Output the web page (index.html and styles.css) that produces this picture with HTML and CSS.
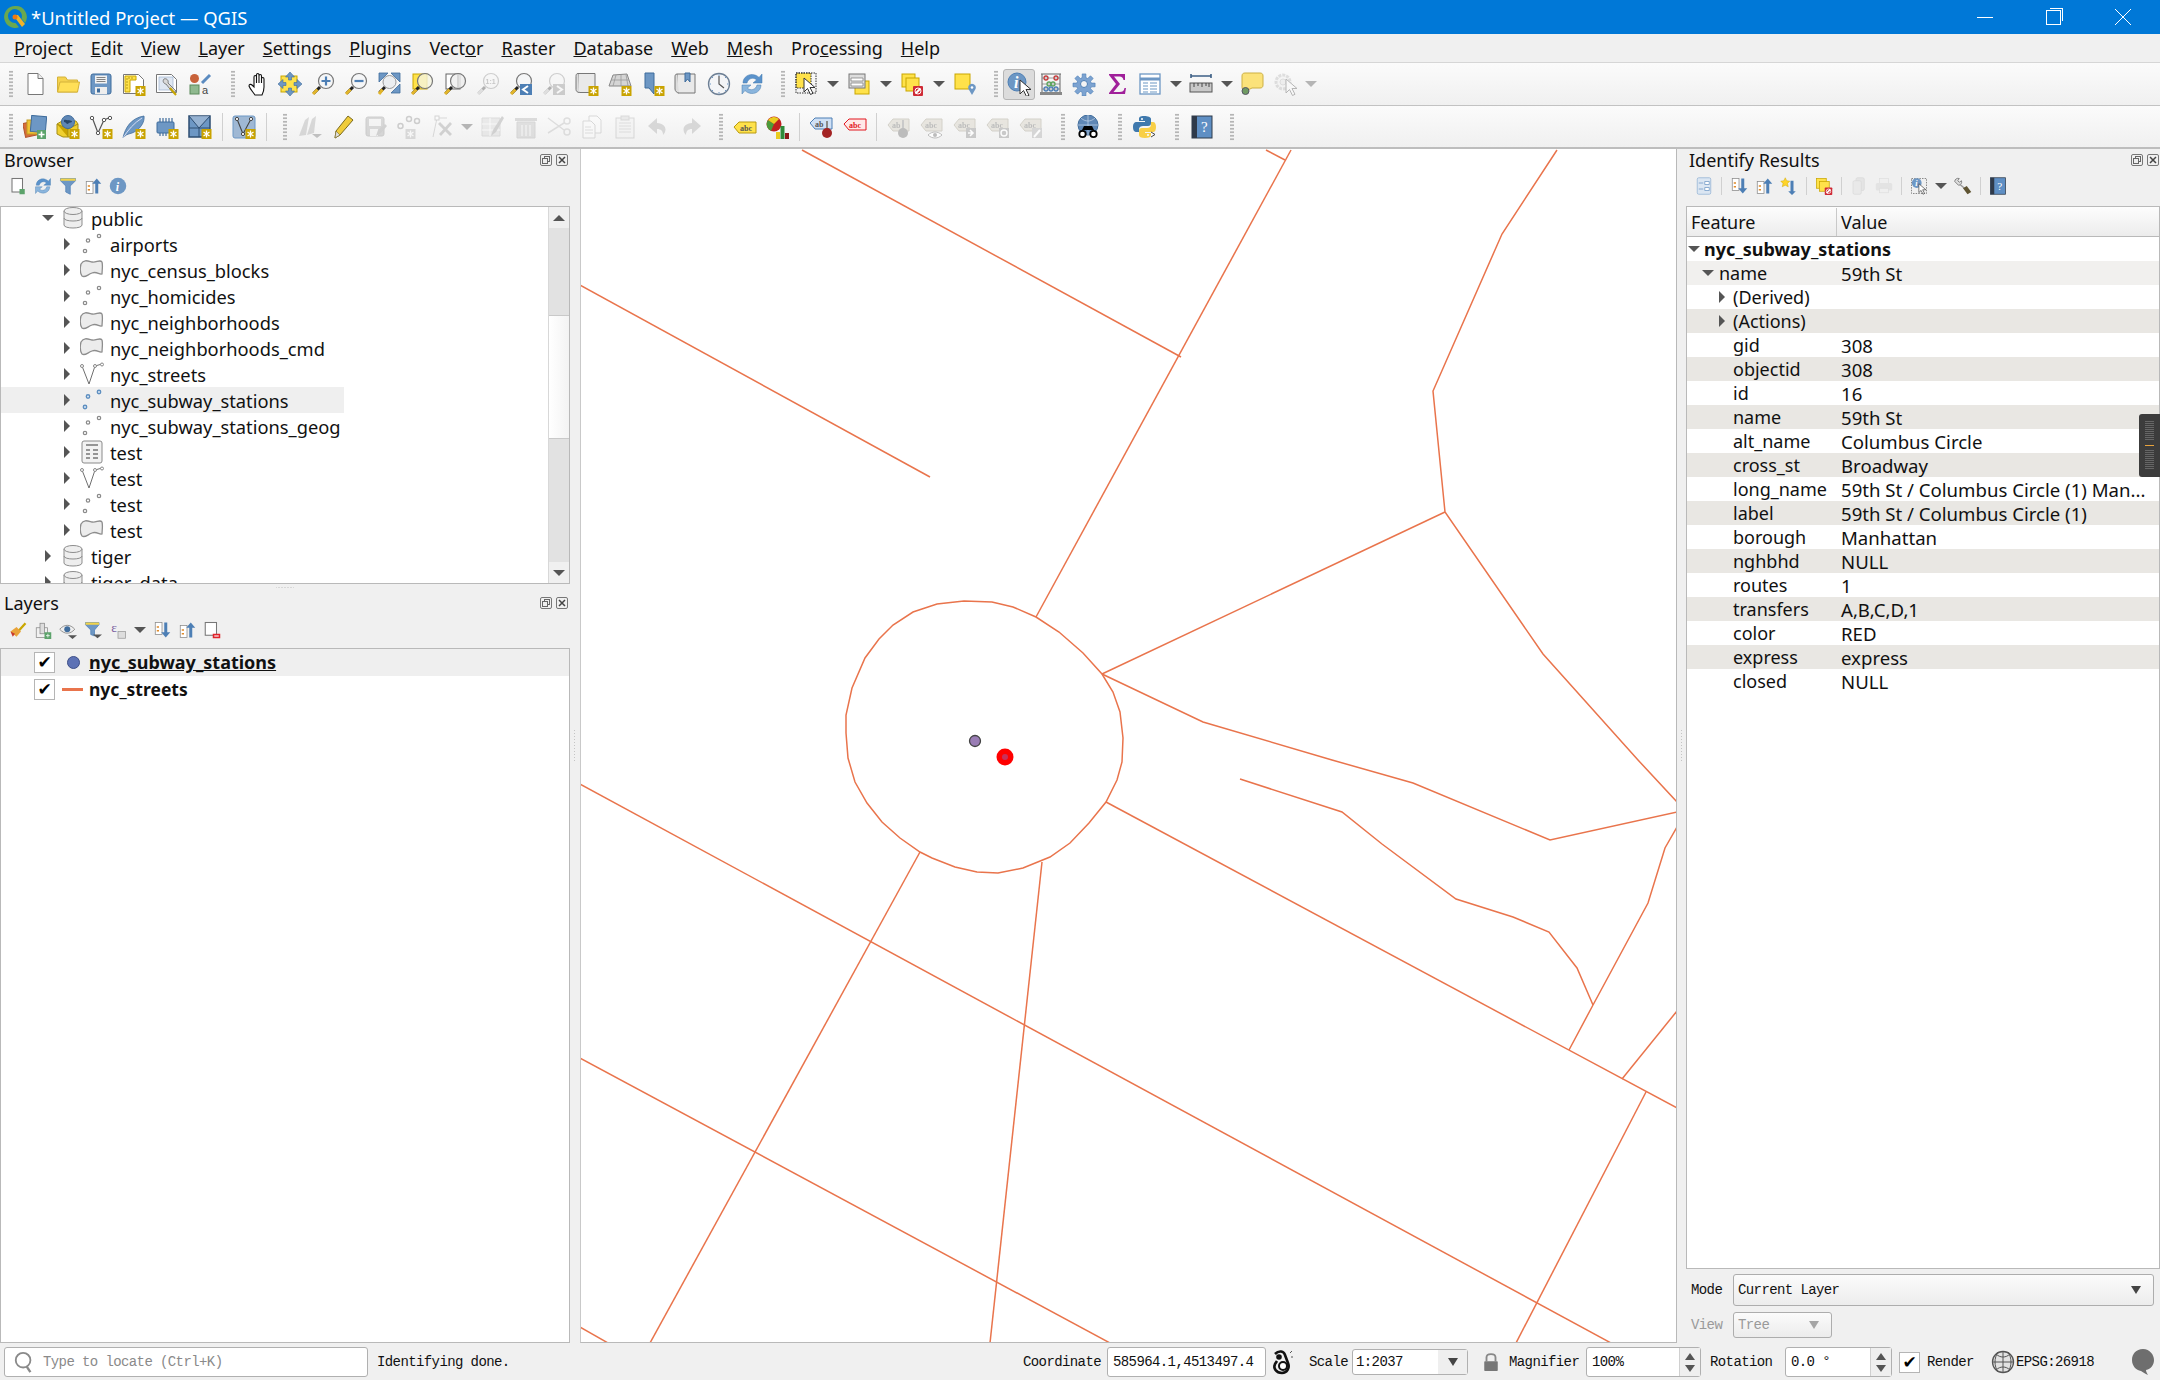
FILE: index.html
```html
<!DOCTYPE html>
<html lang="en">
<head>
<meta charset="utf-8">
<title>*Untitled Project — QGIS</title>
<link rel="stylesheet" href="styles.css">
</head>
<body>
<svg class="sprite" xmlns="http://www.w3.org/2000/svg">
<defs>
<g id="bdg"><rect x="13.5" y="14" width="10" height="10" fill="#c9a300"/><path d="M18.5 15.5v7M15.5 17l6 4M21.5 17l-6 4" stroke="#fff" stroke-width="1.3"/></g>
<g id="lens"><path d="M9 15l-6.500 6.500" stroke="#222" stroke-width="3"/><path d="M6.500 17.500l-4.500 4.500" stroke="#e2b52a" stroke-width="3"/><circle cx="15" cy="9" r="7.500" fill="#f5f6f7" stroke="#777" stroke-width="1.200"/></g>
<g id="ptr"><path d="M8 7v14l3.500-3.500 3 6 2.500-1.200-3-5.800h5z" fill="#fff" stroke="#333" stroke-width="1"/></g>
<g id="tag"><path d="M1 10l5-6h16v12H6z" fill="#e3e0d8" stroke="#c8c5bb"/></g>
<g id="helpb"><rect x="2" y="1" width="20" height="22" fill="#5f8fc4" stroke="#2f3a4a"/><rect x="2" y="1" width="5" height="22" fill="#2f3a4a"/></g>
</defs>
<symbol id="new" viewBox="0 0 24 24"><path d="M5 1.500h10l5 5v16H5z" fill="#fff" stroke="#777"/><path d="M15 1.500v5h5" fill="#eee" stroke="#777"/></symbol>
<symbol id="open" viewBox="0 0 24 24"><path d="M1.500 20V5h8l2 3h10v12z" fill="#f5d24e" stroke="#d4b23a"/><path d="M1.500 20L4 10h19.500l-2 10z" fill="#ffdf57" stroke="#d4b23a"/></symbol>
<symbol id="save" viewBox="0 0 24 24"><rect x="2" y="2" width="20" height="20" rx="2" fill="#6d97c4" stroke="#3f6c9c"/><rect x="6" y="3.500" width="12" height="8" fill="#f2f2f2"/><path d="M7.500 5.500h9M7.500 7.500h9M7.500 9.500h9" stroke="#666" stroke-width=".8"/><rect x="6" y="15" width="12" height="7" fill="#eee"/><rect x="8" y="16.500" width="3" height="4" fill="#3f6c9c"/></symbol>
<symbol id="nlay" viewBox="0 0 24 24"><path d="M1.500 2.500h15l5 5v14h-20z" fill="#fff" stroke="#777"/><path d="M3 4h11v4H8v12H3z" fill="#ffe24a" stroke="#c9a600"/><path d="M4 7h2M4 10h2M4 13h2M4 16h2M7 5v2M10 5v2" stroke="#a58a10" stroke-width=".8"/><use href="#bdg"/></symbol>
<symbol id="lays" viewBox="0 0 24 24"><path d="M1.500 2.500h15l5 5v13h-20z" fill="#fff" stroke="#777"/><rect x="4" y="5" width="14" height="13" fill="#dfe7f2" stroke="#9db3cf" stroke-width=".7"/><path d="M9 7c-2 2 0 5 2 5l7 9 3-2-8-8c1-3-2-5-4-4z" fill="#d9d9d9" stroke="#666" stroke-width=".8"/><path d="M15 16l6 7" stroke="#c9a600" stroke-width="2"/></symbol>
<symbol id="hand" viewBox="0 0 24 24"><path d="M10 23c-2-3-5-6-6-9 0-2 2-2 3-1l2 2V5c0-2 2.500-2 2.500 0v6V3c0-2 2.500-2 2.500 0v8V4c0-2 2.500-2 2.500 0v7V7c0-2 2.500-2 2.500 0v8c0 3-1 6-2 8z" fill="#fff" stroke="#111" stroke-width="1.100"/></symbol>
<symbol id="pan" viewBox="0 0 24 24"><rect x="3" y="4" width="16" height="16" fill="#ffe24a" stroke="#c9a600"/><path d="M12 0l4.500 5h-3v3h-3V5h-3zM12 24l4.500-5h-3v-3h-3v3h-3zM0 12l5-4.500v3h3v3H5v3zM24 12l-5-4.500v3h-3v3h3v3z" fill="#6d97c4" stroke="#3f6c9c" stroke-width=".6"/></symbol>
<symbol id="zin" viewBox="0 0 24 24"><use href="#lens"/><path d="M15 4.500v9M10.500 9h9" stroke="#4d7fb5" stroke-width="2.200"/></symbol>
<symbol id="zout" viewBox="0 0 24 24"><use href="#lens"/><path d="M10.500 9h9" stroke="#4d7fb5" stroke-width="2.200"/></symbol>
<symbol id="zfull" viewBox="0 0 24 24"><path d="M2 1h9L2 10zM23 1v9l-9-9zM23 21h-9l9-9z" fill="#6d97c4" stroke="#3f6c9c" stroke-width=".8"/><path d="M8 15l-5.500 5.500" stroke="#222" stroke-width="3"/><path d="M5.500 17.500l-3.500 4.500" stroke="#e2b52a" stroke-width="3"/><circle cx="12.500" cy="10" r="6.500" fill="#eceef0" stroke="#999"/></symbol>
<symbol id="zsel" viewBox="0 0 24 24"><rect x="3" y="2" width="14" height="15" fill="#ffe24a" stroke="#c9a600"/><path d="M9 15l-6.500 6.500" stroke="#222" stroke-width="3"/><path d="M6.500 17.500l-4.500 4.500" stroke="#e2b52a" stroke-width="3"/><circle cx="15" cy="9" r="7.500" fill="#f5f5e0" fill-opacity=".8" stroke="#777" stroke-width="1.200"/></symbol>
<symbol id="zlay" viewBox="0 0 24 24"><rect x="3" y="2" width="14" height="15" fill="#fff" stroke="#666"/><path d="M9 15l-6.500 6.500" stroke="#222" stroke-width="3"/><path d="M6.500 17.500l-4.500 4.500" stroke="#e2b52a" stroke-width="3"/><circle cx="15" cy="9" r="7.500" fill="#eee" fill-opacity=".8" stroke="#777" stroke-width="1.200"/><path d="M15 2v14" stroke="#bbb"/></symbol>
<symbol id="zlast" viewBox="0 0 24 24"><use href="#lens"/><rect x="11" y="12" width="12" height="11" fill="#4d7fb5"/><path d="M19 14l-5 3.500 5 3.500" fill="none" stroke="#fff" stroke-width="2"/></symbol>
<symbol id="znext" viewBox="0 0 24 24"><use href="#lens"/><rect x="11" y="12" width="12" height="11" fill="#4d7fb5"/><path d="M15 14l5 3.500-5 3.500" fill="none" stroke="#fff" stroke-width="2"/></symbol>
<symbol id="nmap" viewBox="0 0 24 24"><path d="M3 1.500h17v19H5c-2 0-2-2-2-4z" fill="#e9e9e9" stroke="#777"/><path d="M3 1.500c-2 0-2 2-2 3v13c0 2 2 3 3 3" fill="#ddd" stroke="#777"/><use href="#bdg"/></symbol>
<symbol id="n3d" viewBox="0 0 24 24"><path d="M5 3l14-1 4 12H1z" fill="#d5d5d5" stroke="#888"/><path d="M8 3L5 14M13 2.500V14M18 2.500L20 14M3 8h18" stroke="#999" stroke-width=".8"/><use href="#bdg"/></symbol>
<symbol id="nbm" viewBox="0 0 24 24"><path d="M4 1h9v21L8 16H4z" fill="#6d97c4" stroke="#3f6c9c"/><use href="#bdg"/></symbol>
<symbol id="sbm" viewBox="0 0 24 24"><path d="M3 2h18v19H5c-2 0-2-2-2-3z" fill="#e9e9e9" stroke="#777"/><path d="M3 2C1 2 1 4 1 5v12c0 2 2 4 4 4" fill="#ddd" stroke="#777"/><path d="M11 1h5v9l-2.500-3L11 10z" fill="#6d97c4" stroke="#3f6c9c"/></symbol>
<symbol id="clock" viewBox="0 0 24 24"><circle cx="12" cy="12" r="10.500" fill="#f4f5f7" stroke="#6d7f94" stroke-width="1.300"/><path d="M12 4v8l5 4" fill="none" stroke="#555" stroke-width="1.200"/><path d="M12 2.500v1.500M12 20v1.500M2.500 12H4M20 12h1.500M5 5l1 1M18 18l1 1M19 5l-1 1M5 19l1-1" stroke="#6d97c4"/></symbol>
<symbol id="refresh" viewBox="0 0 24 24"><path d="M3 11C3 5 9 1 15 3c2 .7 3 1.500 4 2.500L22 2v9h-9l3.500-3C14 5 8 6 7 11z" fill="#5b93cc" stroke="#4378ac" stroke-width=".5"/><path d="M21 13c0 6-6 10-12 8-2-.7-3-1.500-4-2.500L2 22v-9h9l-3.500 3c2.500 3 8.500 2 9.500-3z" fill="#8ab5dd" stroke="#4378ac" stroke-width=".5"/></symbol>
<symbol id="sel" viewBox="0 0 24 24"><rect x="2" y="1" width="15" height="15" fill="#ffe24a" stroke="#333" stroke-dasharray="1.500 1"/><rect x="2" y="1" width="20" height="20" fill="none" stroke="#333" stroke-dasharray="1.500 1"/><use href="#ptr" transform="translate(2 -1)"/></symbol>
<symbol id="selattr" viewBox="0 0 24 24"><rect x="8" y="9" width="14" height="13" fill="#ffe24a" stroke="#c9a600"/><rect x="2" y="2" width="16" height="14" fill="#ddd" stroke="#777"/><path d="M4 6h12v3H4zM4 11h12v3H4z" fill="#fff" stroke="#777" stroke-width=".7"/></symbol>
<symbol id="desel" viewBox="0 0 24 24"><rect x="2" y="2" width="13" height="13" fill="#ffe24a" stroke="#c9a600"/><rect x="6" y="6" width="13" height="13" fill="#ffe24a" stroke="#c9a600"/><rect x="13" y="14" width="10" height="10" rx="1" fill="#cf2a35"/><path d="M15.500 21.500l5-5" stroke="#fff" stroke-width="2"/><circle cx="18" cy="19" r="3" fill="none" stroke="#fff"/></symbol>
<symbol id="selpin" viewBox="0 0 24 24"><rect x="2" y="2" width="15" height="15" fill="#ffe24a" stroke="#c9a600"/><path d="M19 23l-3.500-6a3.800 3.800 0 1 1 7 0z" fill="#6d97c4"/><circle cx="19" cy="15.500" r="1.300" fill="#fff"/></symbol>
<symbol id="abacus" viewBox="0 0 24 24"><path d="M2 2h20M3 2v19M21 2v19" stroke="#666" fill="none"/><rect x="1" y="20" width="22" height="3" fill="#888"/><path d="M3 6h18M3 12h18M3 17h18" stroke="#777" stroke-width=".7"/><g fill="none" stroke-width="1.300"><circle cx="7" cy="6" r="2" stroke="#c43c3c"/><circle cx="17" cy="6" r="2" stroke="#c43c3c"/><circle cx="10" cy="12" r="2" stroke="#5ca35c"/><circle cx="14" cy="12" r="2" stroke="#5ca35c"/><circle cx="7" cy="17" r="2" stroke="#4d7fb5"/><circle cx="12" cy="17" r="2" stroke="#4d7fb5"/><circle cx="17" cy="17" r="2" stroke="#4d7fb5"/></g></symbol>
<symbol id="gear" viewBox="0 0 24 24"><path d="M10 1h4v4l2 1 3-3 3 3-3 3 1 2h4v4h-4l-1 2 3 3-3 3-3-3-2 1v4h-4v-4l-2-1-3 3-3-3 3-3-1-2H0v-4h4l1-2-3-3 3-3 3 3 2-1z" transform="translate(1 1) scale(.92)" fill="#7ca3d1" stroke="#4d7fb5" stroke-width=".7"/><circle cx="12" cy="12" r="3.500" fill="#f4f4f4" stroke="#4d7fb5"/></symbol>
<symbol id="sigma" viewBox="0 0 24 24"><path d="M4 2h16v6h-1.500c-.5-2-1.500-3.500-4-3.500H9l6 7.500-6.500 8h6c3 0 4.500-1 5-4H21l-1 6H4v-1l7-9-7-9z" fill="#a0209a"/></symbol>
<symbol id="table" viewBox="0 0 24 24"><rect x="2" y="2" width="20" height="20" fill="#fff" stroke="#6d97c4" stroke-width="1.300"/><path d="M2 7h20" stroke="#6d97c4" stroke-width="3"/><path d="M5 11h5M12 11h7M5 14h5M12 14h7M5 17h5M12 17h7M5 20h5M12 20h7" stroke="#6d97c4" stroke-width="1.200"/></symbol>
<symbol id="ruler" viewBox="0 0 24 24"><path d="M2 4h20M2 2v4M22 2v4" stroke="#3d5f85" stroke-width="1.600"/><rect x="1" y="11" width="22" height="9" fill="#c9c9c9" stroke="#555"/><path d="M5 11v4M9 11v3M13 11v4M17 11v3M20 11v4" stroke="#444"/></symbol>
<symbol id="tip" viewBox="0 0 24 24"><path d="M5 1h15c2 0 3 1 3 3v9c0 2-1 3-3 3h-8l-4 2H5c-2 0-3-1-3-3V4c0-2 1-3 3-3z" fill="#fbe27a" stroke="#cdb043"/><circle cx="5.500" cy="19" r="3.500" fill="#6f9a62" stroke="#556"/></symbol>
<symbol id="gearoff" viewBox="0 0 24 24"><circle cx="10" cy="10" r="7" fill="#eee" stroke="#aaa" stroke-width="3" stroke-dasharray="3 1"/><circle cx="10" cy="10" r="3" fill="#ddd" stroke="#aaa"/><use href="#ptr" transform="translate(5 0)"/></symbol>
<symbol id="dsm" viewBox="0 0 24 24"><rect x="1" y="7" width="14" height="14" transform="rotate(-12 8 14)" fill="#d66c3b" stroke="#b2552c"/><rect x="4" y="5" width="13" height="14" fill="#f0c234" stroke="#c29c20"/><rect x="8" y="1" width="15" height="16" transform="rotate(5 15 9)" fill="#6d97c4" stroke="#3f6c9c"/><rect x="14" y="15" width="9" height="9" fill="#5ca36b"/><path d="M18.500 16.500v6M15.500 19.500h6" stroke="#fff" stroke-width="1.600"/></symbol>
<symbol id="gpkg" viewBox="0 0 24 24"><path d="M1 9l5-3h14l2 3v10l-7 3H7l-6-3z" fill="#f0d030" stroke="#a58d14"/><path d="M1 9l11 5v8M12 14l10-5" fill="#c9a300" stroke="#a58d14"/><circle cx="12" cy="7" r="6.500" fill="#5f87b5" stroke="#3f6c9c"/><path d="M8 5c2-1 3 1 5 0 1 1 3 0 3 2-2 1-3 0-4 2-2 0-2-2-4-2z" fill="#28466a"/><use href="#bdg"/></symbol>
<symbol id="nshp" viewBox="0 0 24 24"><path d="M3 2l6 16 6-13 7-3" fill="none" stroke="#555" stroke-width="1.200"/><g fill="#fff" stroke="#555"><circle cx="3" cy="3" r="1.700"/><circle cx="9" cy="18" r="1.700"/><circle cx="15" cy="5" r="1.700"/><circle cx="21" cy="3" r="1.700"/></g><use href="#bdg"/></symbol>
<symbol id="feather" viewBox="0 0 24 24"><path d="M1 23C3 13 9 3 22 1c1 6-4 14-12 17-3 1-5 1-7 3z" fill="#6d97c4" stroke="#3f6c9c" stroke-width=".8"/><path d="M1 23C6 15 12 8 20 3" stroke="#eef" fill="none" stroke-width=".8"/><use href="#bdg"/></symbol>
<symbol id="chip" viewBox="0 0 24 24"><rect x="2" y="7" width="17" height="11" rx="1" fill="#6d97c4" stroke="#3f6c9c"/><path d="M5 3v4M8 3v4M11 3v4M14 3v4M17 3v4M5 18v3M8 18v3M11 18v3" stroke="#3f6c9c" stroke-width="1.200"/><use href="#bdg"/></symbol>
<symbol id="mesh" viewBox="0 0 24 24"><rect x="1" y="1" width="21" height="21" fill="#6d97c4" stroke="#2e4e72" stroke-width="1.500"/><path d="M1 1h21L11 13z" fill="#a6bdd8" fill-opacity=".7"/><path d="M1 13h21M11 13v9M1 1l10 12M22 1L11 13" stroke="#2e4e72" fill="none"/><use href="#bdg"/></symbol>
<symbol id="vlayer" viewBox="0 0 24 24"><rect x="1" y="1" width="22" height="22" rx="2" fill="#9fb8d4" stroke="#6d97c4"/><path d="M5 4l6 15 8-15" fill="none" stroke="#444" stroke-width="1.100"/><g fill="#fff" stroke="#444"><circle cx="5" cy="4" r="1.600"/><circle cx="11" cy="19" r="1.600"/><circle cx="19" cy="4" r="1.600"/></g><use href="#bdg"/></symbol>
<symbol id="penoff" viewBox="0 0 24 24"><path d="M1 21L7 5l4-3-3 18zM9 20l5-16 4-3-2 17z" fill="#999"/><path d="M14 19h10l-5 4z" fill="#555"/></symbol>
<symbol id="pencil" viewBox="0 0 24 24"><path d="M4 23l1-7L17 1l5 4L9 20z" fill="#f0cc3a" stroke="#7a6a20"/><path d="M4 23l1-7 4 4z" fill="#ddd" stroke="#7a6a20" stroke-width=".6"/></symbol>
<symbol id="save2" viewBox="0 0 24 24"><rect x="2" y="2" width="18" height="19" rx="2" fill="#999" stroke="#777"/><rect x="5" y="4" width="12" height="7" fill="#eee"/><rect x="6" y="14" width="8" height="7" fill="#eee"/><path d="M12 21l2-6 7-6 2 2-6 7z" fill="#888"/></symbol>
<symbol id="dots" viewBox="0 0 24 24"><g fill="none" stroke="#777" stroke-width="1.500"><circle cx="3.500" cy="11" r="2.500"/><circle cx="12" cy="4" r="2.500"/><circle cx="20" cy="6" r="2.500"/></g><use href="#bdg" transform="translate(-5 0)"/></symbol>
<symbol id="tools" viewBox="0 0 24 24"><path d="M3 22L7 3M7 3h10" stroke="#999" fill="none"/><rect x="5" y="1" width="4" height="4" fill="#fff" stroke="#888"/><path d="M8 9l12 12 2-2L10 7zM20 7L9 19l2 2L22 9z" fill="#888"/></symbol>
<symbol id="tblpen" viewBox="0 0 24 24"><path d="M1 3h18v18H1z" fill="#cfcfc0" stroke="#a5a5a0"/><path d="M1 9h18M1 15h18M9 3v18" stroke="#fff"/><path d="M10 21l2-6 9-14 2 2-8 14z" fill="#888"/></symbol>
<symbol id="trash" viewBox="0 0 24 24"><rect x="1" y="3" width="22" height="3" fill="#b19b95"/><path d="M3 7h18v16H3z" fill="#c0aea8" stroke="#a58f88"/><path d="M8 10v11M12 10v11M16 10v11" stroke="#fff"/></symbol>
<symbol id="scissors" viewBox="0 0 24 24"><path d="M1 3l16 12M1 18L17 8" stroke="#aaa" stroke-width="1.500"/><circle cx="20" cy="6" r="3" fill="none" stroke="#aaa" stroke-width="1.500"/><circle cx="20" cy="17" r="3" fill="none" stroke="#aaa" stroke-width="1.500"/></symbol>
<symbol id="copy" viewBox="0 0 24 24"><path d="M9 1h8l4 4v13H9z" fill="#fff" stroke="#999"/><path d="M3 6h8l4 4v13H3z" fill="#fff" stroke="#999"/><path d="M5 12h6M5 15h8M5 18h8" stroke="#aaa"/></symbol>
<symbol id="paste" viewBox="0 0 24 24"><rect x="3" y="3" width="18" height="20" fill="#eee" stroke="#999"/><rect x="8" y="1" width="8" height="4" fill="#ccc" stroke="#999"/><path d="M6 8h12M6 11h12M6 14h12M6 17h12" stroke="#aaa"/></symbol>
<symbol id="undo" viewBox="0 0 24 24"><path d="M11 3L2 11l9 8v-5c4 0 6 2 6 6 4-4 4-11-6-12z" fill="#999"/></symbol>
<symbol id="redo" viewBox="0 0 24 24"><path d="M13 3l9 8-9 8v-5c-4 0-6 2-6 6-4-4-4-11 6-12z" fill="#999"/></symbol>
<symbol id="pie" viewBox="0 0 24 24"><circle cx="8" cy="9" r="7.500" fill="#c01f1f"/><path d="M8 9L2 5a7.500 7.500 0 0 0 3 11z" fill="#4c9a3a"/><path d="M8 9L2 5a7.500 7.500 0 0 1 11-1z" fill="#e9cc20"/><rect x="10" y="17" width="4" height="7" fill="#e9cc20"/><rect x="14.500" y="11" width="4" height="13" fill="#2e8b3a"/><rect x="19" y="18" width="4" height="6" fill="#8a1a1a"/></symbol>
<symbol id="globe" viewBox="0 0 24 24"><circle cx="12" cy="10" r="10" fill="#5f87b5" stroke="#3f6c9c"/><path d="M2 10h20M12 0v20M5 3c4 4 10 4 14 0M5 17c4-4 10-4 14 0" stroke="#c5d6e8" fill="none" stroke-width=".7"/><path d="M6 15l2-4h8l2 4z" fill="#000"/><circle cx="6.500" cy="19" r="3.200" fill="#fff" stroke="#000" stroke-width="1.800"/><circle cx="17.500" cy="19" r="3.200" fill="#fff" stroke="#000" stroke-width="1.800"/></symbol>
<symbol id="py" viewBox="0 0 24 24"><path d="M11 1c-4 0-5 1-5 3v2h6v1H4C1 7 0 9 0 12s1 5 4 5h2v-3c0-2 2-3 4-3h5c2 0 3-1 3-3V4c0-2-3-3-7-3z" fill="#3f79ad"/><path d="M12 23c4 0 6-1 6-3v-2h-6v-1h8c2 0 3-2 3-5s-1-5-3-5h-2v3c0 2-2 3-4 3H9c-2 0-3 1-3 3v4c0 2 2 3 6 3z" fill="#f8cf47"/><circle cx="9" cy="4" r="1" fill="#fff"/><circle cx="15" cy="20" r="1" fill="#fff"/><path d="M18 17l4 2.500-4 2.500" fill="#fff" stroke="#444"/></symbol>
<symbol id="pt" viewBox="0 0 24 24"><g fill="#fff" stroke="#8a8a8a" stroke-width="1.200"><circle cx="5" cy="19" r="1.700"/><circle cx="8" cy="8.500" r="1.700"/><circle cx="19" cy="4" r="1.700"/></g></symbol>
<symbol id="ptb" viewBox="0 0 24 24"><g fill="#dce8f5" stroke="#5e8fc0" stroke-width="1.400"><circle cx="5" cy="19" r="1.700"/><circle cx="8" cy="8.500" r="1.700"/><circle cx="19" cy="4" r="1.700"/></g></symbol>
<symbol id="poly" viewBox="0 0 24 24"><path d="M1 6c3-5 7-3 11-2s8-3 10 0c1 4 0 9 0 12-3 1-5-3-10-1s-7 5-10 3C0 15 0 10 1 6z" fill="#ececec" stroke="#8d8d8d" stroke-width="1.300"/></symbol>
<symbol id="line" viewBox="0 0 24 24"><path d="M2 4l7 18 6-18 7-2" fill="none" stroke="#6f6f6f"/><g fill="#fff" stroke="#888"><circle cx="2" cy="4" r="1.500"/><circle cx="15" cy="4" r="1.500"/><circle cx="22" cy="2.500" r="1.500"/></g></symbol>
<symbol id="tbl" viewBox="0 0 24 24"><rect x="2" y="1" width="20" height="22" rx="2" fill="#f2f2f2" stroke="#8a8a8a"/><path d="M6 5h12M6 10h4M13 10h5M6 14h4M13 14h5M6 18h4M13 18h5" stroke="#777" stroke-width="1.400"/></symbol>
<symbol id="db" viewBox="0 0 24 24"><path d="M3 5v14c0 4 18 4 18 0V5z" fill="#eee" stroke="#8d8d8d"/><ellipse cx="12" cy="5" rx="9" ry="3.500" fill="#eee" stroke="#8d8d8d"/><path d="M3 12c0 4 18 4 18 0" fill="none" stroke="#8d8d8d"/></symbol>
<symbol id="addb" viewBox="0 0 24 24"><rect x="4" y="2" width="14" height="18" fill="#fff" stroke="#777" stroke-width="1.400"/><rect x="14" y="16" width="7" height="7" fill="#5ca36b"/></symbol>
<symbol id="filter" viewBox="0 0 24 24"><path d="M2 2h20v3l-7 7v11l-6-3v-8L2 5z" fill="#6d97c4" stroke="#4d7fb5"/><rect x="2" y="2" width="20" height="3" fill="#f1d34a"/></symbol>
<symbol id="coll" viewBox="0 0 24 24"><rect x="3" y="6" width="9" height="16" fill="#fff" stroke="#888"/><path d="M5 12h3M5 17h3" stroke="#e08a2a" stroke-width="2"/><path d="M15 22V9h-4l6-7 6 7h-4v13z" fill="#4d7fb5"/></symbol>
<symbol id="expd" viewBox="0 0 24 24"><rect x="3" y="2" width="9" height="16" fill="#fff" stroke="#888"/><path d="M5 8h3M5 13h3" stroke="#e08a2a" stroke-width="2"/><path d="M15 2v13h-4l6 7 6-7h-4V2z" fill="#4d7fb5"/></symbol>
<symbol id="brush" viewBox="0 0 24 24"><path d="M12 14L22 3" stroke="#c9a600" stroke-width="3"/><path d="M2 14l8-6 6 6-6 7z" fill="#e9a33a"/><path d="M2 14l6 3-3 4z" fill="#c8392e"/></symbol>
<symbol id="addg" viewBox="0 0 24 24"><rect x="3" y="9" width="15" height="13" fill="#f1f1f1" stroke="#888"/><rect x="8" y="3" width="6" height="14" fill="#ddd" stroke="#888"/><rect x="14" y="15" width="9" height="9" fill="#5ca36b"/><path d="M18.500 17v5M16 19.500h5" stroke="#fff"/></symbol>
<symbol id="eye" viewBox="0 0 24 24"><path d="M1 11c6-7 14-7 20 0-6 7-14 7-20 0z" fill="#eee" stroke="#777"/><circle cx="11" cy="11" r="4" fill="#3f6c9c"/><path d="M12 19h12l-6 5z" fill="#555"/></symbol>
<symbol id="filt2" viewBox="0 0 24 24"><path d="M2 2h18v3l-6 7v8l-5-2v-6L2 5z" fill="#6d97c4" stroke="#4d7fb5"/><rect x="2" y="2" width="18" height="3" fill="#f1d34a"/><path d="M12 18h12l-6 5z" fill="#555"/></symbol>
<symbol id="rml" viewBox="0 0 24 24"><rect x="3" y="2" width="15" height="17" fill="#fff" stroke="#777" stroke-width="1.400"/><rect x="13" y="17" width="10" height="6" fill="#e0242b"/><path d="M15 20h6" stroke="#fff" stroke-width="1.500"/></symbol>
<symbol id="idv" viewBox="0 0 24 24"><rect x="3" y="1" width="18" height="22" rx="2" fill="#dbe6f2" stroke="#93b2d3"/><path d="M5 8h6M5 16h6M13 6h6v4h-6zM13 14h6v4h-6z" stroke="#6d97c4" fill="#fff"/></symbol>
<symbol id="star" viewBox="0 0 24 24"><path d="M7 1l2 4 4 .5-3 3 1 4.500-4-2-4 2 1-4.500-3-3L5 5z" fill="#ffd42a" stroke="#c9a600" stroke-width=".6"/><path d="M14 5v14h-3l5 5 5-5h-3V5z" fill="#4d7fb5"/></symbol>
<symbol id="cpy" viewBox="0 0 24 24"><rect x="8" y="1" width="11" height="17" rx="2" fill="#ccc" stroke="#aaa"/><rect x="4" y="5" width="11" height="18" rx="2" fill="#ddd" stroke="#aaa"/></symbol>
<symbol id="prt" viewBox="0 0 24 24"><rect x="6" y="2" width="12" height="7" fill="#eee" stroke="#bbb"/><rect x="1" y="8" width="22" height="10" rx="2" fill="#c9c9c9"/><rect x="6" y="15" width="12" height="6" fill="#eee" stroke="#bbb"/></symbol>
<symbol id="wrench" viewBox="0 0 24 24"><path d="M1 6c0-3 3-5 6-4L5 5l2 2 3-2c1 3-1 6-4 6z" fill="#ddd" stroke="#666"/><path d="M8 10l6 5" stroke="#999" stroke-width="2"/><path d="M12 15l5-3 6 8-5 3z" fill="#5f5432"/></symbol>
<symbol id="docke" viewBox="0 0 24 24"><rect x="1" y="1" width="22" height="22" rx="3" fill="none" stroke="#777" stroke-width="2"/><rect x="9" y="5" width="10" height="10" fill="none" stroke="#666" stroke-width="2"/><rect x="5" y="9" width="10" height="10" fill="#eee" stroke="#666" stroke-width="2"/></symbol>
<symbol id="dockx" viewBox="0 0 24 24"><rect x="1" y="1" width="22" height="22" rx="3" fill="none" stroke="#777" stroke-width="2"/><path d="M6 6l12 12M18 6L6 18" stroke="#444" stroke-width="3"/></symbol>
<symbol id="qgis" viewBox="0 0 24 24"><path d="M12 1a11 11 0 1 0 4 21.300l-3.500-4.300a7 7 0 1 1 6-4.500l3.500 4.500A11 11 0 0 0 12 1z" fill="#6aa84f"/><path d="M10 10h5l7 9-3 3z" fill="#f0b429"/><circle cx="12" cy="12" r="2.500" fill="#ee7913"/></symbol>
<symbol id="srch" viewBox="0 0 24 24"><circle cx="11" cy="10" r="8" fill="none" stroke="#8a8a8a" stroke-width="2"/><path d="M15 17l4 6" stroke="#8a8a8a" stroke-width="2.600"/></symbol>
<symbol id="cap" viewBox="0 0 24 24"><path d="M5 4c4-4 9-3 10 1l3 8c2 5-1 10-6 10-6 0-9-5-7-9l2-3" fill="none" stroke="#111" stroke-width="2.600"/><circle cx="9" cy="7" r="2.800" fill="#111"/><circle cx="13" cy="16" r="4" fill="#fff" stroke="#111" stroke-width="2"/><path d="M20 3l2-2M21 7h2" stroke="#555"/></symbol>
<symbol id="lock" viewBox="0 0 24 24"><path d="M6 11V6c0-6 12-6 12 0v5" fill="none" stroke="#888" stroke-width="2.500"/><rect x="3" y="11" width="18" height="13" rx="1" fill="#777"/></symbol>
<symbol id="earth" viewBox="0 0 24 24"><circle cx="12" cy="12" r="10.500" fill="#e2e2e2" stroke="#555" stroke-width="1.300"/><path d="M1 12h22M12 1v22M5 4c4 4 10 4 14 0M5 20c4-4 10-4 14 0M7 2c-4 6-4 14 0 20M17 2c4 6 4 14 0 20" stroke="#555" fill="none"/></symbol>
<symbol id="msg" viewBox="0 0 24 26"><path d="M12 0C5 0 1 5 1 11s4 10 9 11c2 1 4 3 7 4-1-2-2-3-2-5 5-1 8-5 8-10S19 0 12 0z" fill="#6e6e6e"/></symbol>
</svg>

<div class="app">
  <header class="titlebar">
    <svg class="qlogo"><use href="#qgis"/></svg>
    <span class="ttl">*Untitled Project — QGIS</span>
    <span class="wbtn"><span class="wmin"></span></span>
    <span class="wbtn"><span class="wres"></span></span>
    <span class="wbtn"><span class="wcls"></span></span>
  </header>
  <nav class="menubar">
    <span><u>P</u>roject</span><span><u>E</u>dit</span><span><u>V</u>iew</span><span><u>L</u>ayer</span><span><u>S</u>ettings</span><span><u>P</u>lugins</span><span>Vect<u>o</u>r</span><span><u>R</u>aster</span><span><u>D</u>atabase</span><span><u>W</u>eb</span><span><u>M</u>esh</span><span>Pro<u>c</u>essing</span><span><u>H</u>elp</span>
  </nav>
  <div class="tb">
    <i class="g g0"></i>
    <svg class="i"><use href="#new"/></svg><svg class="i"><use href="#open"/></svg><svg class="i"><use href="#save"/></svg><svg class="i"><use href="#nlay"/></svg><svg class="i"><use href="#lays"/></svg>
    <svg class="i" viewBox="0 0 24 24"><circle cx="6.500" cy="6.500" r="4.500" fill="#c8623a"/><path d="M14 11l8-8" stroke="#5b8bc0" stroke-width="3"/><rect x="2" y="13" width="9" height="9" fill="#8fb98f" stroke="#5b8a5b"/><text x="14" y="22" class="svgt">a</text></svg>
    <i class="g"></i>
    <svg class="i"><use href="#hand"/></svg><svg class="i"><use href="#pan"/></svg><svg class="i"><use href="#zin"/></svg><svg class="i"><use href="#zout"/></svg><svg class="i"><use href="#zfull"/></svg><svg class="i"><use href="#zsel"/></svg><svg class="i"><use href="#zlay"/></svg>
    <svg class="i off" viewBox="0 0 24 24"><use href="#lens"/><text x="9.500" y="12" class="svgs">1:1</text></svg>
    <svg class="i"><use href="#zlast"/></svg><svg class="i off"><use href="#znext"/></svg><svg class="i"><use href="#nmap"/></svg><svg class="i"><use href="#n3d"/></svg><svg class="i"><use href="#nbm"/></svg><svg class="i"><use href="#sbm"/></svg><svg class="i"><use href="#clock"/></svg><svg class="i"><use href="#refresh"/></svg>
    <i class="g gs"></i>
    <svg class="i"><use href="#sel"/></svg><i class="dp"></i><svg class="i"><use href="#selattr"/></svg><i class="dp"></i><svg class="i"><use href="#desel"/></svg><i class="dp"></i><svg class="i"><use href="#selpin"/></svg>
    <i class="g gs"></i>
    <span class="act"><svg class="i ia" viewBox="0 0 24 24"><circle cx="10" cy="10" r="9" fill="#6d97c4" stroke="#4d7fb5"/><text x="7" y="16" class="svgi">i</text><use href="#ptr" transform="translate(5 1)"/></svg></span><svg class="i"><use href="#abacus"/></svg><svg class="i"><use href="#gear"/></svg><svg class="i"><use href="#sigma"/></svg><svg class="i"><use href="#table"/></svg><i class="dp dn"></i><svg class="i"><use href="#ruler"/></svg><i class="dp dn"></i><svg class="i"><use href="#tip"/></svg><svg class="i off"><use href="#gearoff"/></svg><i class="dp dn dl"></i>
  </div>
  <div class="tb tb2">
    <i class="g g0"></i>
    <svg class="i"><use href="#dsm"/></svg><svg class="i"><use href="#gpkg"/></svg><svg class="i"><use href="#nshp"/></svg><svg class="i"><use href="#feather"/></svg><svg class="i"><use href="#chip"/></svg><svg class="i"><use href="#mesh"/></svg>
    <i class="sp"></i><svg class="i"><use href="#vlayer"/></svg><i class="sp"></i>
    <i class="g gw"></i>
    <svg class="i off"><use href="#penoff"/></svg><svg class="i"><use href="#pencil"/></svg><svg class="i off"><use href="#save2"/></svg><svg class="i off"><use href="#dots"/></svg><svg class="i off"><use href="#tools"/></svg><i class="dp dn dl"></i><svg class="i off"><use href="#tblpen"/></svg><svg class="i off"><use href="#trash"/></svg><svg class="i off"><use href="#scissors"/></svg><svg class="i off"><use href="#copy"/></svg><svg class="i off"><use href="#paste"/></svg><svg class="i off"><use href="#undo"/></svg><svg class="i off"><use href="#redo"/></svg>
    <i class="g gs"></i>
    <svg class="i" viewBox="0 0 24 24"><path d="M1 12l5-5h17v11H6z" fill="#ffe24a" stroke="#b89a10"/><text x="7" y="16" class="svgl">abc</text></svg><svg class="i"><use href="#pie"/></svg>
    <i class="sp"></i>
    <svg class="i" viewBox="0 0 24 24"><path d="M0 8l5-5h17v11H5z" fill="#cfe0f5" stroke="#4d7fb5"/><text x="5" y="12" class="svgl">ab</text><path d="M17 6v8" stroke="#888" stroke-width="2"/><circle cx="17" cy="18" r="5" fill="#a32323"/></svg>
    <svg class="i" viewBox="0 0 24 24"><path d="M1 9l5-5h17v11H6z" fill="#ffe8e8" stroke="#e2171f"/><text x="6" y="13" class="svgr">abc</text></svg>
    <i class="sp"></i>
    <svg class="i off1" viewBox="0 0 24 24"><use href="#tag"/><text x="5" y="13" class="svgg">ab</text><path d="M16 5v10" stroke="#bbb" stroke-width="2"/><circle cx="16" cy="18" r="5" fill="#aaa"/></svg>
    <svg class="i off1" viewBox="0 0 24 24"><use href="#tag"/><text x="5" y="13" class="svgg">abc</text><path d="M8 20c4-4 10-4 14 0-4 4-10 4-14 0z" fill="#fff" stroke="#aaa"/><circle cx="15" cy="20" r="2" fill="#aaa"/></svg>
    <svg class="i off1" viewBox="0 0 24 24"><use href="#tag"/><text x="5" y="13" class="svgg">abc</text><rect x="13" y="13" width="10" height="10" fill="#bbb"/><path d="M15 18h4M17 15l3 3-3 3" stroke="#fff" stroke-width="1.600" fill="none"/></svg>
    <svg class="i off1" viewBox="0 0 24 24"><use href="#tag"/><text x="5" y="13" class="svgg">abc</text><rect x="13" y="13" width="10" height="10" fill="#bbb"/><circle cx="18" cy="18" r="3" fill="none" stroke="#fff" stroke-width="1.400"/></svg>
    <svg class="i off1" viewBox="0 0 24 24"><use href="#tag"/><text x="5" y="13" class="svgg">abc</text><rect x="13" y="13" width="10" height="10" fill="#ccc"/><path d="M15 22l6-7" stroke="#fff" stroke-width="2"/></svg>
    <i class="g"></i><svg class="i"><use href="#globe"/></svg>
    <i class="g"></i><svg class="i"><use href="#py"/></svg>
    <i class="g"></i><svg class="i" viewBox="0 0 24 24"><use href="#helpb"/><text x="11" y="17" class="svgq">?</text></svg>
    <i class="g gs"></i>
  </div>

  <main class="work">
    <section class="left">
      <div class="dhead"><span>Browser</span><span class="dbtns"><svg class="dk"><use href="#docke"/></svg><svg class="dk"><use href="#dockx"/></svg></span></div>
      <div class="ptb">
        <svg class="pi"><use href="#addb"/></svg><svg class="pi"><use href="#refresh"/></svg><svg class="pi"><use href="#filter"/></svg><svg class="pi"><use href="#coll"/></svg>
        <svg class="pi" viewBox="0 0 24 24"><circle cx="12" cy="12" r="11" fill="#6d97c4"/><text x="9" y="18" class="svgi">i</text></svg>
      </div>
      <div class="browser">
        <div class="btree">
          <div class="tr l1"><i class="ad"></i><svg class="ti"><use href="#db"/></svg><span class="tx1">public</span></div>
          <div class="tr l2"><i class="ar"></i><svg class="ti"><use href="#pt"/></svg><span class="tx2">airports</span></div>
          <div class="tr l2"><i class="ar"></i><svg class="ti"><use href="#poly"/></svg><span class="tx2">nyc_census_blocks</span></div>
          <div class="tr l2"><i class="ar"></i><svg class="ti"><use href="#pt"/></svg><span class="tx2">nyc_homicides</span></div>
          <div class="tr l2"><i class="ar"></i><svg class="ti"><use href="#poly"/></svg><span class="tx2">nyc_neighborhoods</span></div>
          <div class="tr l2"><i class="ar"></i><svg class="ti"><use href="#poly"/></svg><span class="tx2">nyc_neighborhoods_cmd</span></div>
          <div class="tr l2"><i class="ar"></i><svg class="ti"><use href="#line"/></svg><span class="tx2">nyc_streets</span></div>
          <div class="tr l2 hov"><i class="ar"></i><svg class="ti"><use href="#ptb"/></svg><span class="tx2">nyc_subway_stations</span></div>
          <div class="tr l2"><i class="ar"></i><svg class="ti"><use href="#pt"/></svg><span class="tx2">nyc_subway_stations_geog</span></div>
          <div class="tr l2"><i class="ar"></i><svg class="ti"><use href="#tbl"/></svg><span class="tx2">test</span></div>
          <div class="tr l2"><i class="ar"></i><svg class="ti"><use href="#line"/></svg><span class="tx2">test</span></div>
          <div class="tr l2"><i class="ar"></i><svg class="ti"><use href="#pt"/></svg><span class="tx2">test</span></div>
          <div class="tr l2"><i class="ar"></i><svg class="ti"><use href="#poly"/></svg><span class="tx2">test</span></div>
          <div class="tr l1"><i class="ar"></i><svg class="ti"><use href="#db"/></svg><span class="tx1">tiger</span></div>
          <div class="tr l1"><i class="ar"></i><svg class="ti"><use href="#db"/></svg><span class="tx1">tiger_data</span></div>
        </div>
        <div class="vsb"><span class="sbtn"><i class="au"></i></span><span class="s1"></span><span class="s2"></span><span class="s3"></span><span class="sbtn"><i class="adn"></i></span></div>
      </div>
      <div class="hsplit"></div>
      <div class="dhead dh2"><span>Layers</span><span class="dbtns"><svg class="dk"><use href="#docke"/></svg><svg class="dk"><use href="#dockx"/></svg></span></div>
      <div class="ptb ptl">
        <svg class="pi"><use href="#brush"/></svg><svg class="pi"><use href="#addg"/></svg><svg class="pi"><use href="#eye"/></svg><svg class="pi"><use href="#filt2"/></svg>
        <svg class="pi" viewBox="0 0 24 24"><text x="3" y="15" class="svge">ε</text><rect x="12" y="14" width="10" height="9" fill="#ddd" stroke="#999"/></svg>
        <i class="dp dt"></i><svg class="pi"><use href="#expd"/></svg><svg class="pi"><use href="#coll"/></svg><svg class="pi"><use href="#rml"/></svg>
      </div>
      <div class="layers">
        <div class="lr lsel"><span class="cb">✔</span><span class="sym"><i class="dot"></i></span><b class="ul">nyc_subway_stations</b></div>
        <div class="lr"><span class="cb">✔</span><span class="sym"><i class="dash"></i></span><b class="lb2">nyc_streets</b></div>
      </div>
    </section>

    <div class="vsplit"></div>
    <div class="canvas">
      <svg class="map" viewBox="580 149 1097 1194">
        <g class="st">
          <polyline points="802,150 1181,357"/>
          <polyline points="1266,150 1285,160"/>
          <polyline points="1291,150 1036,617"/>
          <polyline points="580,285 930,477"/>
          <polyline points="1557,150 1502,234 1433,391 1445,512 1543,654 1638,760 1677,802"/>
          <polyline points="1445,512 1102,674"/>
          <polyline points="1102,674 1203,722 1332,760 1413,783 1550,840 1677,812"/>
          <polyline points="1240,779 1342,812 1382,844 1456,899 1513,917 1549,932 1577,968 1593,1005"/>
          <polyline points="1106,802 1677,1108"/>
          <polyline points="1677,827 1665,848 1648,903 1593,1005 1569,1050"/>
          <polyline points="1677,1011 1622,1079"/>
          <polyline points="1646,1092 1516,1343"/>
          <polyline points="920,852 650,1343"/>
          <polyline points="1042,862 990,1343"/>
          <polyline points="580,784 1611,1343"/>
          <polyline points="580,1058 1110,1343"/>
          <polyline points="580,1327 608,1343"/>
          <polygon points="964,601 992,602 1013,607 1036,617 1059,632 1083,653 1102,674 1113,692 1120,712 1123,738 1122,762 1117,780 1106,802 1089,823 1070,843 1050,857 1023,868 998,873 977,872 955,867 932,858 920,852 900,838 882,822 867,803 855,782 848,758 846,733 846,715 852,688 865,658 879,639 893,625 913,612 937,604"/>
        </g>
        <circle cx="975" cy="741" r="5.500" class="pp"/>
        <circle cx="1005" cy="757" r="8.500" class="rd"/>
        <circle cx="1005" cy="757" r="3" class="rdi"/>
      </svg>
    </div>
    <div class="vsplit vs2"></div>

    <section class="right">
      <div class="dhead dh3"><span>Identify Results</span><span class="dbtns"><svg class="dk"><use href="#docke"/></svg><svg class="dk"><use href="#dockx"/></svg></span></div>
      <div class="itb">
        <svg class="pi"><use href="#idv"/></svg><i class="sp2"></i><svg class="pi"><use href="#expd"/></svg><svg class="pi"><use href="#coll"/></svg><svg class="pi"><use href="#star"/></svg><i class="sp2"></i><svg class="pi"><use href="#desel"/></svg><i class="sp2"></i><svg class="pi off"><use href="#cpy"/></svg><svg class="pi off"><use href="#prt"/></svg><i class="sp2"></i>
        <svg class="pi" viewBox="0 0 24 24"><rect x="2" y="2" width="20" height="20" fill="none" stroke="#666" stroke-dasharray="2 1.500"/><circle cx="9" cy="8" r="6.500" fill="#6d97c4"/><text x="7" y="12" class="svgj">i</text><use href="#ptr" transform="translate(5 3) scale(.85)"/></svg>
        <i class="dp dt"></i><svg class="pi"><use href="#wrench"/></svg><i class="sp2"></i>
        <svg class="pi" viewBox="0 0 24 24"><use href="#helpb"/><text x="11" y="17" class="svgq">?</text></svg>
      </div>
      <div class="itree">
        <div class="ihead"><span class="k0">Feature</span><span class="v0">Value</span></div>
        <div class="ir"><span class="k kr"><i class="ad"></i><b>nyc_subway_stations</b></span></div>
        <div class="ir a0"><span class="k kn"><i class="ad"></i>name</span><span class="v">59th St</span></div>
        <div class="ir"><span class="k kd"><i class="ar"></i>(Derived)</span></div>
        <div class="ir a1"><span class="k kd"><i class="ar"></i>(Actions)</span></div>
        <div class="ir"><span class="k">gid</span><span class="v">308</span></div>
        <div class="ir a1"><span class="k">objectid</span><span class="v">308</span></div>
        <div class="ir"><span class="k">id</span><span class="v">16</span></div>
        <div class="ir a1"><span class="k">name</span><span class="v">59th St</span></div>
        <div class="ir"><span class="k">alt_name</span><span class="v">Columbus Circle</span></div>
        <div class="ir a1"><span class="k">cross_st</span><span class="v">Broadway</span></div>
        <div class="ir"><span class="k">long_name</span><span class="v">59th St / Columbus Circle (1) Man...</span></div>
        <div class="ir a1"><span class="k">label</span><span class="v">59th St / Columbus Circle (1)</span></div>
        <div class="ir"><span class="k">borough</span><span class="v">Manhattan</span></div>
        <div class="ir a1"><span class="k">nghbhd</span><span class="v">NULL</span></div>
        <div class="ir"><span class="k">routes</span><span class="v">1</span></div>
        <div class="ir a1"><span class="k">transfers</span><span class="v">A,B,C,D,1</span></div>
        <div class="ir"><span class="k">color</span><span class="v">RED</span></div>
        <div class="ir a1"><span class="k">express</span><span class="v">express</span></div>
        <div class="ir"><span class="k">closed</span><span class="v">NULL</span></div>
        <div class="tab"><i class="tk"></i><i class="tko"></i><i class="tk"></i></div>
      </div>
      <div class="irow"><label>Mode</label><span class="combo cm">Current Layer<i class="cdn"></i></span></div>
      <div class="irow irow2"><label class="dis">View</label><span class="combo cv">Tree<i class="cdn cdg"></i></span></div>
    </section>
  </main>

  <footer class="status">
    <span class="loc"><svg class="li"><use href="#srch"/></svg>Type to locate (Ctrl+K)</span>
    <span class="msg">Identifying done.</span>
    <span class="sl s-coord">Coordinate</span>
    <span class="fld f-coord">585964.1,4513497.4</span>
    <svg class="si si-cap"><use href="#cap"/></svg>
    <span class="sl s-scale">Scale</span>
    <span class="fld f-scale">1:2037<span class="dd"><i class="cdn"></i></span></span>
    <svg class="si si-lock"><use href="#lock"/></svg>
    <span class="sl s-mag">Magnifier</span>
    <span class="fld f-mag">100%<span class="spn"><i class="au"></i><i class="adn"></i></span></span>
    <span class="sl s-rot">Rotation</span>
    <span class="fld f-rot">0.0 °<span class="spn"><i class="au"></i><i class="adn"></i></span></span>
    <span class="cb cbs">✔</span>
    <span class="sl s-ren">Render</span>
    <svg class="si si-earth"><use href="#earth"/></svg>
    <span class="sl s-eps">EPSG:26918</span>
    <svg class="si si-msg"><use href="#msg"/></svg>
  </footer>
</div>
</body>
</html>
```

FILE: styles.css
```css
* { box-sizing: border-box; }
html, body { margin: 0; padding: 0; }
body { width: 2160px; height: 1380px; overflow: hidden; background: #f0f0f0; font-family: "Noto Sans", "Liberation Sans", sans-serif; font-size: 18px; color: #111; }
i { display: block; font-style: normal; }
.sprite { position: absolute; width: 0; height: 0; }
.app { display: flex; flex-direction: column; width: 2160px; height: 1380px; }

.titlebar { flex: none; height: 34px; background: #0078d7; color: #fff; display: flex; align-items: center; padding-right: 3px; }
.qlogo { width: 24px; height: 26px; margin: 0 4px 0 3px; }
.ttl { flex: 1; font-size: 18.4px; }
.wbtn { width: 69px; height: 34px; display: flex; align-items: center; justify-content: center; }
.wmin { width: 16px; height: 1px; background: #fff; }
.wres { width: 15px; height: 15px; border: 1px solid #fff; box-shadow: 2px -2px 0 -1px #0078d7, 3px -3px 0 -1px #fff; }
.wcls { width: 16px; height: 16px; background: linear-gradient(45deg, transparent 47%, #fff 47%, #fff 53%, transparent 53%), linear-gradient(-45deg, transparent 47%, #fff 47%, #fff 53%, transparent 53%); }

.menubar { flex: none; height: 28px; display: flex; align-items: center; padding-left: 14px; gap: 18px; font-size: 18px; }

.tb { flex: none; height: 44px; display: flex; align-items: center; background: linear-gradient(#fbfbfb, #f0f0f0); border-top: 1px solid #d6d6d6; border-bottom: 1px solid #c2c2c2; }
.tb2 { height: 43px; border-top: 0; border-bottom: 2px solid #bdbdbd; }
.i { width: 24px; height: 24px; margin: 0 4.5px; flex: none; }
.off { opacity: .32; filter: grayscale(1); }
.off1 { opacity: .75; }
.g { width: 4px; height: 28px; margin: 0 6px 0 14px; flex: none; background-image: radial-gradient(circle, #b5b5b5 .8px, transparent 1px); background-size: 2px 3.5px; }
.g0 { margin: 0 5.500px 0 9px; }
.gs { margin: 0 5px 0 12px; }
.gw { margin: 0 6.500px 0 11px; }
.dp { width: 20px; height: 24px; flex: none; display: flex; align-items: center; justify-content: center; }
.dp::before { content: ""; border-left: 6px solid transparent; border-right: 6px solid transparent; border-top: 6px solid #555; }
.dn { width: 18px; }
.dl::before { border-top-color: #b5b5b5; }
.dt { width: 19px; height: 18px; }
.act { flex: none; width: 32px; height: 31px; background: #dcdcdc; border: 1px solid #b5b5b5; border-radius: 3px; display: flex; align-items: center; justify-content: center; }
.ia { margin: 0; }
.sp { width: 1px; height: 28px; background: #d0d0d0; flex: none; margin: 0 5px; }

.work { flex: 1; display: flex; min-height: 0; }
.left { width: 570px; flex: none; display: flex; flex-direction: column; }
.vsplit { width: 10px; flex: none; padding: 580px 3px; background-image: radial-gradient(circle, #c4c4c4 .7px, transparent .9px); background-size: 3px 3px; background-clip: content-box; background-origin: content-box; }
.vs2 { width: 9px; }
.canvas { width: 1097px; flex: none; border-bottom: 1px solid #b9b9b9; border-right: 1px solid #b9b9b9; border-left: 1px solid #c9c9c9; background: #fff; overflow: hidden; }
.map { display: block; width: 1097px; height: 1194px; margin-left: -1px; }
.st polyline, .st polygon { fill: none; stroke: #e9744c; stroke-width: 1.500; }
.pp { fill: #9a7db5; stroke: #444; stroke-width: 1.300; }
.rd { fill: #ff0000; }
.rdi { fill: #c8305a; }
.right { width: 474px; flex: none; display: flex; flex-direction: column; }

.dhead { flex: none; height: 24px; display: flex; align-items: center; justify-content: space-between; padding: 0 2px 2px 4px; font-size: 18px; }
.dh2 { height: 26px; padding: 0 2px 0 4px; }
.dh3 { padding: 0 1px 2px 3px; }
.dbtns { display: flex; gap: 4px; }
.dk { width: 12px; height: 12px; }
.ptb { flex: none; height: 33px; display: flex; align-items: center; padding: 0 0 7px 9px; }
.ptl { height: 32px; padding-bottom: 4px; }
.pi { width: 18px; height: 18px; margin: 0 3.500px; flex: none; }
.pi:first-child { margin-left: 0; }

.browser { flex: none; height: 378px; border: 1px solid #b9b9b9; background: #fff; display: flex; font-size: 18.3px; }
.btree { flex: 1; overflow: hidden; min-width: 0; }
.tr { height: 26px; display: flex; align-items: center; white-space: nowrap; }
.tr:first-child { margin-top: -2px; }
.l1 { padding-left: 44px; }
.l2 { padding-left: 63px; }
.hov { background: linear-gradient(90deg, #efefef 343px, #fff 343px); }
.ar { width: 0; height: 0; border-top: 6px solid transparent; border-bottom: 6px solid transparent; border-left: 6px solid #555; margin-right: 10px; flex: none; }
.ad { width: 0; height: 0; border-left: 6px solid transparent; border-right: 6px solid transparent; border-top: 6px solid #555; margin: 0 7px 0 -3px; flex: none; }
.ti { width: 24px; height: 24px; flex: none; }
.tx1 { margin-left: 6px; }
.tx2 { margin-left: 6px; }
.vsb { width: 21px; flex: none; display: flex; flex-direction: column; background: #f0f0f0; border-left: 1px solid #d8d8d8; }
.sbtn { height: 21px; flex: none; display: flex; align-items: center; justify-content: center; }
.s1 { height: 88px; background: #e2e2e2; border-bottom: 1px solid #c9c9c9; }
.s2 { height: 123px; background: linear-gradient(90deg, #fff, #f3f3f3); border-bottom: 1px solid #c9c9c9; }
.s3 { flex: 1; background: #e2e2e2; }
.au { width: 0; height: 0; border-left: 6px solid transparent; border-right: 6px solid transparent; border-bottom: 6px solid #555; }
.adn { width: 0; height: 0; border-left: 6px solid transparent; border-right: 6px solid transparent; border-top: 6px solid #555; }
.hsplit { flex: none; height: 6px; background-image: radial-gradient(circle, #c0c0c0 .7px, transparent .9px); background-size: 3px 3px; background-position: center; background-repeat: repeat-x; background-clip: content-box; padding: 1px 276px; }

.layers { flex: 1; border: 1px solid #b9b9b9; background: #fff; min-height: 0; }
.lr { height: 27px; display: flex; align-items: center; padding: 0 0 1px 33px; font-size: 18px; }
.lsel { background: #efefef; }
.cb { width: 21px; height: 21px; flex: none; border: 1px solid #b5b5b5; background: #fff; display: flex; align-items: center; justify-content: center; font: 17px "DejaVu Sans", sans-serif; letter-spacing: 0; color: #000; }
.sym { width: 34px; flex: none; display: flex; justify-content: center; }
.dot { width: 13px; height: 13px; border-radius: 50%; background: #5d72b5; border: 1px solid #3e4f88; margin-left: 2px; }
.dash { width: 21px; height: 3px; background: #e9744c; margin-left: 1px; }
.ul { text-decoration: underline; }
.lb2 { font-size: 17.5px; }

.itb { flex: none; height: 33px; display: flex; align-items: center; padding: 0 0 7px 9px; }
.sp2 { width: 1px; height: 18px; background: #d0d0d0; flex: none; margin: 0 4.500px; }
.itree { position: relative; flex: none; height: 1063px; border: 1px solid #b9b9b9; background: #fff; font-size: 18px; }
.ihead { height: 30px; display: flex; background: linear-gradient(#fdfdfd, #ececec); border-bottom: 1px solid #b9b9b9; align-items: center; }
.k0 { width: 150px; padding-left: 4px; border-right: 1px solid #c9c9c9; line-height: 28px; flex: none; }
.v0 { padding-left: 4px; }
.ir { height: 24px; display: flex; align-items: center; white-space: nowrap; }
.a0 { background: #f1f0ee; }
.a1 { background: #e9e7e3; }
.k { width: 150px; flex: none; padding-left: 46px; display: flex; align-items: center; }
.kr { width: 300px; padding-left: 1px; }
.kr .ad { margin: 0 4px 0 0; }
.kn { padding-left: 15px; }
.kn .ad { margin: 0 5px 0 0; }
.kd { padding-left: 32px; }
.kd .ar { margin-right: 8px; }
.v { padding-left: 4px; font-size: 18.6px; }
.tab { position: absolute; right: -1px; top: 207px; width: 21px; height: 63px; background: #3c3c3c; border-radius: 3px 0 0 3px; display: flex; flex-direction: column; align-items: center; padding: 7px 0; gap: 4px; }
.tk { width: 9px; flex: 1; background-image: repeating-linear-gradient(#666 0 1px, transparent 1px 2px); }
.tko { width: 9px; height: 1px; background: #e8a33d; }

.irow { flex: none; height: 32px; margin-top: 5px; display: flex; align-items: center; padding-left: 5px; font: 14px "Liberation Mono", monospace; letter-spacing: -.6px; }
.irow label { width: 42px; flex: none; }
.irow .dis { color: #9a9a9a; }
.irow2 { height: 26px; margin-top: 6px; }
.combo { display: flex; align-items: center; height: 100%; border: 1px solid #adadad; border-radius: 3px; background: linear-gradient(#fbfbfb, #ececec); padding-left: 4px; position: relative; }
.cm { width: 421px; }
.cv { width: 99px; color: #9a9a9a; }
.cdn { width: 0; height: 0; border-left: 5px solid transparent; border-right: 5px solid transparent; border-top: 8px solid #444; margin-left: auto; margin-right: 12px; }
.cdg { border-top-color: #a5a5a5; }

.status { flex: none; height: 37px; padding-top: 1px; display: flex; align-items: center; font: 14px "Liberation Mono", monospace; letter-spacing: -.6px; white-space: nowrap; }
.loc { width: 364px; height: 30px; margin-left: 4px; flex: none; display: flex; align-items: center; background: #fff; border: 1px solid #b0b0b0; border-radius: 3px; color: #8a8a8a; }
.li { width: 22px; height: 24px; margin: 0 8px; }
.msg { margin-left: 9px; width: 646px; flex: none; }
.sl { flex: none; }
.s-coord { width: 84px; }
.fld { flex: none; height: 30px; display: flex; align-items: center; background: #fff; border: 1px solid #b0b0b0; border-radius: 3px; padding-left: 5px; }
.f-coord { width: 159px; }
.si { flex: none; }
.si-cap { width: 24px; height: 30px; margin-left: 4px; }
.s-scale { margin-left: 15px; width: 43px; }
.f-scale { width: 116px; height: 26px; padding-left: 3px; }
.dd { margin-left: auto; width: 29px; height: 100%; background: #efefef; display: flex; align-items: center; }
.dd .cdn { margin: 0 auto; }
.si-lock { width: 18px; height: 24px; margin-left: 14px; }
.s-mag { margin-left: 9px; width: 77px; }
.f-mag { width: 115px; }
.spn { margin-left: auto; width: 21px; height: 100%; background: #efefef; border-left: 1px solid #d0d0d0; display: flex; flex-direction: column; align-items: center; justify-content: center; gap: 5px; }
.spn .au, .spn .adn { border-left-width: 5px; border-right-width: 5px; }
.spn .au { border-bottom-width: 7px; }
.spn .adn { border-top-width: 7px; }
.s-rot { margin-left: 9px; width: 75px; }
.f-rot { width: 107px; }
.cbs { margin-left: 7px; }
.s-ren { margin-left: 7px; width: 48px; }
.si-earth { width: 24px; height: 24px; margin-left: 16px; }
.s-eps { width: 82px; margin-left: 1px; }
.si-msg { width: 24px; height: 26px; margin-left: 33px; }

.svgt { font: 11px "Liberation Sans", sans-serif; fill: #444; }
.svgs { font: bold 7px "Liberation Sans", sans-serif; fill: #666; }
.svgi { font: italic bold 16px "Liberation Serif", serif; fill: #fff; }
.svgj { font: italic bold 11px "Liberation Serif", serif; fill: #fff; }
.svgl { font: bold 8px "Liberation Serif", serif; fill: #555; }
.svgr { font: bold 8px "Liberation Serif", serif; fill: #e2171f; }
.svgg { font: bold 8px "Liberation Serif", serif; fill: #aaa; }
.svgq { font: 15px "Liberation Serif", serif; fill: #fff; }
.svge { font: 18px "Liberation Serif", serif; fill: #7a5ea0; }
```
